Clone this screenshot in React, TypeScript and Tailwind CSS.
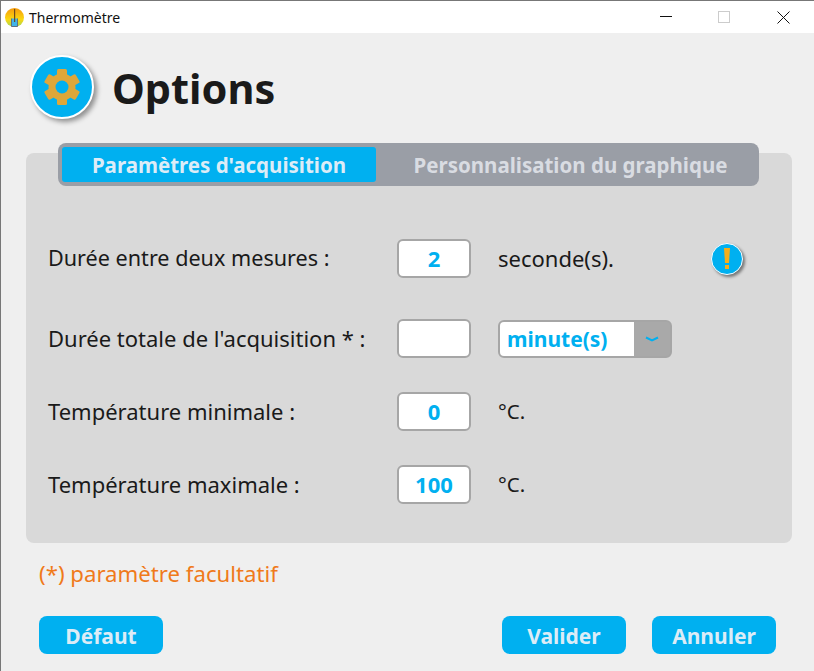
import React from 'react';

const FONT = "font-['Noto_Sans','Open_Sans',sans-serif]";

function AppIcon() {
  return (
    <svg width="19" height="19" viewBox="0 0 19 19" className="ml-[4px] shrink-0">
      <defs>
        <linearGradient id="app-grad" x1="0" y1="0" x2="0" y2="1">
          <stop offset="0" stopColor="#f59a0c" />
          <stop offset="0.6" stopColor="#fbd80f" />
          <stop offset="1" stopColor="#a3d65a" />
        </linearGradient>
      </defs>
      <circle cx="9.5" cy="9.5" r="9.5" fill="url(#app-grad)" />
      <path d="M6.5 10.5v8h6v-8" fill="#3fb4e8" stroke="#5f6f80" strokeWidth="1" />
      <rect x="9" y="1" width="1.2" height="13" fill="#6b4a20" />
    </svg>
  );
}

function TitleBar() {
  return (
    <div className="flex h-[32px] items-center bg-white">
      <AppIcon />
      <span className="ml-[5px] text-[14px] text-[#111]">Thermomètre</span>
      <div className="ml-auto flex items-center">
        <svg width="12" height="12" viewBox="0 0 12 12" className="mr-[46px]">
          <path d="M0 5.5h12" stroke="#111" strokeWidth="1" />
        </svg>
        <svg width="12" height="12" viewBox="0 0 12 12" className="mr-[47px]">
          <rect x="0.5" y="0.5" width="11" height="11" fill="none" stroke="#ccc" />
        </svg>
        <svg width="13" height="13" viewBox="0 0 13 13" className="mr-[24px]">
          <path d="M0.5 0.5l12 12M12.5 0.5l-12 12" stroke="#111" strokeWidth="1" />
        </svg>
      </div>
    </div>
  );
}

function GearBadge() {
  return (
    <div className="flex h-[64px] w-[64px] items-center justify-center rounded-full border-2 border-white bg-[#00b0f0] shadow-[3px_3px_5px_rgba(0,0,0,0.4)]">
      <svg width="36" height="36" viewBox="0 0 36 36">
        <g fill="#dea73a">
          <circle cx="18" cy="18" r="13.5" />
          <rect x="13" y="0" width="10" height="36" rx="1.5" />
          <rect x="13" y="0" width="10" height="36" rx="1.5" transform="rotate(60 18 18)" />
          <rect x="13" y="0" width="10" height="36" rx="1.5" transform="rotate(120 18 18)" />
        </g>
        <circle cx="18" cy="18" r="6.5" fill="#00b0f0" />
      </svg>
    </div>
  );
}

function WarnBadge() {
  return (
    <div className="ml-[97px] flex h-[32px] w-[32px] items-center justify-center rounded-full border border-white bg-[#00b0f0] shadow-[2px_2px_3px_rgba(0,0,0,0.45)]">
      <svg width="8" height="22" viewBox="0 0 8 22">
        <path d="M1 0h6l-1 15H2z" fill="#f5ae1b" />
        <rect x="2" y="17" width="4" height="4" fill="#f5ae1b" />
      </svg>
    </div>
  );
}

function ValueBox({ value }: { value?: string }) {
  return (
    <input
      readOnly
      value={value ?? ''}
      className="h-[39px] w-[74px] shrink-0 rounded-[6px] border-2 border-[#a6a6a6] bg-white pb-[2px] text-center text-[22px] font-bold text-[#00b0f0] outline-none"
    />
  );
}

function UnitSelect() {
  return (
    <div className="ml-[27px] flex h-[38px] w-[174px] overflow-hidden rounded-[6px] border-2 border-[#a6a6a6] bg-[#a9a9a9]">
      <div className="flex w-[134px] items-center bg-white pl-[7px] pt-[2px] text-[21px] font-bold text-[#00b0f0]">minute(s)</div>
      <div className="flex flex-1 items-center justify-center">
        <svg width="14" height="6" viewBox="0 0 14 6">
          <path d="M1 1.5l6 3 6-3" fill="none" stroke="#00b0f0" strokeWidth="2" />
        </svg>
      </div>
    </div>
  );
}

function Row({
  label,
  children,
  className,
  labelClassName = 'text-[22px]',
}: {
  label: string;
  children: React.ReactNode;
  className: string;
  labelClassName?: string;
}) {
  return (
    <div className={`flex items-center ${className}`}>
      <div className={`w-[371px] pl-[22px] text-[#1a1a1a] ${labelClassName}`}>{label}</div>
      {children}
    </div>
  );
}

function ActionButton({ label, className = '' }: { label: string; className?: string }) {
  return (
    <button className={`h-[38px] w-[124px] rounded-[8px] bg-[#00b0f0] pt-[2px] text-[21px] font-bold text-[#dcecf7] ${className}`}>
      {label}
    </button>
  );
}

export default function App() {
  return (
    <div className={`h-[671px] w-[814px] overflow-hidden border-t border-l border-[#777] bg-[#efefef] ${FONT}`}>
      <TitleBar />

      {/* Header */}
      <div className="flex items-center pl-[29px] pt-[22px]">
        <GearBadge />
        <h1 className="ml-[18px] mt-[3px] text-[41.5px] leading-none font-bold text-[#1a1a1a]">Options</h1>
      </div>

      {/* Panel */}
      <div className="ml-[25px] mt-[34px] flow-root h-[390px] w-[766px] rounded-[8px] bg-[#d9d9d9]">
        <div className="relative ml-[32px] -mt-[10px] flex h-[43px] w-[701px] rounded-[8px] bg-[#9a9ea6] p-[4px] text-[20.5px] font-bold">
          <div className="flex w-[314px] items-center justify-center rounded-[3px] bg-[#00b0f0] pt-[1px] text-[#dcecf7]">
            Paramètres d'acquisition
          </div>
          <div className="flex flex-1 items-center justify-center pl-[10px] pt-[1px] text-[#d9dce2]">Personnalisation du graphique</div>
        </div>

        <Row label="Durée entre deux mesures :" className="mt-[53px]" labelClassName="text-[21.6px]">
          <ValueBox value="2" />
          <span className="ml-[27px] w-[116px] text-[22px] text-[#1a1a1a]">seconde(s).</span>
          <WarnBadge />
        </Row>
        <Row label="Durée totale de l'acquisition * :" className="mt-[41px]">
          <ValueBox />
          <UnitSelect />
        </Row>
        <Row label="Température minimale :" className="mt-[34px]">
          <ValueBox value="0" />
          <span className="ml-[27px] text-[20.5px] text-[#1a1a1a]">°C.</span>
        </Row>
        <Row label="Température maximale :" className="mt-[34px]">
          <ValueBox value="100" />
          <span className="ml-[27px] text-[20.5px] text-[#1a1a1a]">°C.</span>
        </Row>
      </div>

      <p className="ml-[38px] mt-[14px] text-[22.2px] text-[#f07a1a]">(*) paramètre facultatif</p>

      {/* Footer buttons */}
      <div className="ml-[38px] mt-[26px] flex w-[737px]">
        <ActionButton label="Défaut" />
        <ActionButton label="Valider" className="ml-auto" />
        <ActionButton label="Annuler" className="ml-[26px]" />
      </div>
    </div>
  );
}
